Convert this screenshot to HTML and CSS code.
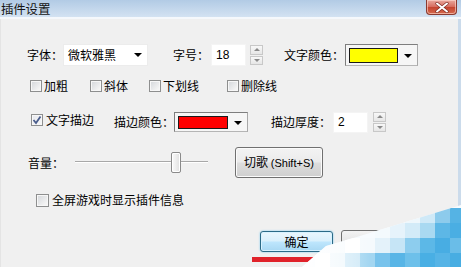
FILE: index.html
```html
<!DOCTYPE html>
<html lang="zh-CN">
<head>
<meta charset="utf-8">
<title>插件设置</title>
<link rel="stylesheet" href="styles.css">
</head>
<body>
<div class="win">
  <div class="titlebar">
    <span class="title">插件设置</span>
    <span class="close">
      <svg width="14" height="11" viewBox="0 0 14 11"><path d="M2 1.5 L12 9.5 M12 1.5 L2 9.5" stroke="#7a2a22" stroke-width="3.2" stroke-linecap="round"/><path d="M2 1.5 L12 9.5 M12 1.5 L2 9.5" stroke="#ffffff" stroke-width="2" stroke-linecap="round"/></svg>
    </span>
  </div>
  <div class="body">
    <div class="content">
      <div class="row r1">
        <span class="lbl w36">字体：</span>
        <div class="combo">
          <span class="combo-text">微软雅黑</span>
          <i class="arrow"></i>
        </div>
        <span class="lbl w38 ml25">字号：</span>
        <div class="field w35">18</div>
        <div class="spinbtns ml4"><b class="sb up"></b><b class="sb down"></b></div>
        <span class="lbl w61 ml21">文字颜色：</span>
        <div class="colorcombo w73">
          <span class="swatch yellow"></span>
          <span class="dd"><i class="arrow"></i></span>
        </div>
      </div>

      <div class="row r2">
        <label class="chk w60"><span class="cb"></span><span>加粗</span></label>
        <label class="chk w59"><span class="cb"></span><span>斜体</span></label>
        <label class="chk w78"><span class="cb"></span><span>下划线</span></label>
        <label class="chk"><span class="cb"></span><span>删除线</span></label>
      </div>

      <div class="row r3">
        <label class="chk chk-up"><span class="cb checked"><svg width="10" height="10" viewBox="0 0 10 10"><path d="M1.5 5 L4 8 L8.5 1.5" fill="none" stroke="#4a5d8c" stroke-width="1.8"/></svg></span><span>文字描边</span></label>
        <span class="lbl w60 ml20">描边颜色：</span>
        <div class="colorcombo w74 h20">
          <span class="swatch red"></span>
          <span class="dd"><i class="arrow"></i></span>
        </div>
        <span class="lbl w62 ml23">描边厚度：</span>
        <div class="field w35 h21">2</div>
        <div class="spinbtns ml5"><b class="sb up"></b><b class="sb down"></b></div>
      </div>

      <div class="row r4">
        <span class="lbl w47">音量：</span>
        <div class="slider">
          <span class="track"></span>
          <span class="thumb"></span>
        </div>
        <button class="btn cut">切歌 <span class="latin">(Shift+S)</span></button>
      </div>

      <div class="row r5">
        <label class="chk"><span class="cb"></span><span>全屏游戏时显示插件信息</span></label>
      </div>

      <div class="row r6">
        <button class="btn ok">确定</button>
        <button class="btn cancel"></button>
      </div>
    </div>
    <div class="edge"></div>
  </div>

  <span class="underline"></span>

  <svg class="mosaic" width="171" height="67" viewBox="290 200 171 67">
    <defs>
      <clipPath id="cp"><polygon points="302,267 326,246 360,236 461,205 461,267"/></clipPath>
      <linearGradient id="wh" x1="0" y1="0" x2="1" y2="0">
        <stop offset="0" stop-color="#ffffff" stop-opacity="1"/>
        <stop offset="1" stop-color="#ffffff" stop-opacity="0"/>
      </linearGradient>
    </defs>
    <g clip-path="url(#cp)">
      <rect x="290" y="200" width="171" height="67" fill="#f7fbfe"/>
      <rect x="405" y="208" width="15" height="15" fill="#eef7fc"/>
      <rect x="420" y="208" width="15" height="15" fill="#cfe9f7"/>
      <rect x="435" y="208" width="15" height="15" fill="#8dcbec"/>
      <rect x="450" y="208" width="11" height="15" fill="#55b3e4"/>
      <rect x="375" y="223" width="15" height="15" fill="#f4fafd"/>
      <rect x="390" y="223" width="15" height="15" fill="#e6f3fb"/>
      <rect x="405" y="223" width="15" height="15" fill="#d3ebf8"/>
      <rect x="420" y="223" width="15" height="15" fill="#a9d9f1"/>
      <rect x="435" y="223" width="15" height="15" fill="#5db7e6"/>
      <rect x="450" y="223" width="11" height="15" fill="#4aaee3"/>
      <rect x="345" y="238" width="15" height="15" fill="#ffffff"/>
      <rect x="360" y="238" width="15" height="15" fill="#f5fafd"/>
      <rect x="375" y="238" width="15" height="15" fill="#e4f2fa"/>
      <rect x="390" y="238" width="15" height="15" fill="#c6e5f6"/>
      <rect x="405" y="238" width="15" height="15" fill="#8dcdee"/>
      <rect x="420" y="238" width="15" height="15" fill="#5cb8e7"/>
      <rect x="435" y="238" width="15" height="15" fill="#48ade3"/>
      <rect x="450" y="238" width="11" height="15" fill="#6abde8"/>
      <rect x="315" y="253" width="15" height="14" fill="#ffffff"/>
      <rect x="330" y="253" width="15" height="14" fill="#eef7fc"/>
      <rect x="345" y="253" width="15" height="14" fill="#cfe9f7"/>
      <rect x="360" y="253" width="15" height="14" fill="#a3d6f1"/>
      <rect x="375" y="253" width="15" height="14" fill="#78c3ec"/>
      <rect x="390" y="253" width="15" height="14" fill="#58b5e6"/>
      <rect x="405" y="253" width="15" height="14" fill="#6dc0ea"/>
      <rect x="420" y="253" width="15" height="14" fill="#49afe4"/>
      <rect x="435" y="253" width="15" height="14" fill="#56b4e6"/>
      <rect x="450" y="253" width="11" height="14" fill="#48ade2"/>
      <rect x="300" y="238" width="70" height="29" fill="url(#wh)"/>
    </g>
  </svg>
</div>
</body>
</html>
```

FILE: styles.css
```css
* { box-sizing: border-box; margin: 0; padding: 0; }
html, body { width: 461px; height: 267px; overflow: hidden; }
body {
  font-family: "Noto Sans CJK SC", "Noto Sans", sans-serif;
  font-size: 12px;
  line-height: 16px;
  color: #000;
  background: #f0f0f0;
}
.win {
  position: relative;
  width: 461px;
  height: 267px;
  display: flex;
  flex-direction: column;
  background: #f0f0f0;
  overflow: hidden;
}
.titlebar {
  height: 19px;
  flex: none;
  display: flex;
  justify-content: space-between;
  align-items: flex-start;
  background: linear-gradient(#b2cbe5, #d3e2f2);
  border-bottom: 2px solid #f5f8fc;
}
.title { font-size: 12.5px; line-height: 17px; color: #151515; letter-spacing: -0.2px; padding-left: 1px; }
.close {
  width: 31px;
  height: 15px;
  margin-right: 4px;
  display: flex;
  align-items: center;
  justify-content: center;
  border: 1px solid #8a3a30;
  border-top: none;
  border-radius: 0 0 4px 4px;
  background: linear-gradient(#e9a99e, #d66a5c 50%, #c4442f 52%, #d56a4f);
  box-shadow: inset 0 0 0 1px rgba(255, 220, 210, 0.6);
}
.body { flex: 1; display: flex; }
.content {
  flex: 1;
  padding-left: 27px;
  display: flex;
  flex-direction: column;
  border-left: 1px solid #e4e4e4;
}
.edge { width: 3px; background: #cbdbeb; }

.row { display: flex; align-items: center; flex: none; }
.r1 { margin-top: 25px; height: 22px; margin-left: -1px; }
.r2 { margin-top: 13px; height: 14px; padding-left: 2px; }
.r3 { margin-top: 18px; height: 22px; }
.r4 { margin-top: 14px; height: 31px; }
.r5 { margin-top: 14px; height: 16px; padding-left: 8px; }
.r6 { margin-top: 23px; height: 21px; padding-left: 232px; align-items: flex-start; }

.lbl { white-space: nowrap; flex: none; }
.w35 { width: 35px; } .w36 { width: 36px; } .w38 { width: 38px; }
.w47 { width: 47px; } .w59 { width: 59px; } .w60 { width: 60px; }
.w61 { width: 61px; } .w62 { width: 62px; } .w73 { width: 73px; }
.w74 { width: 74px; } .w78 { width: 78px; }
.ml4 { margin-left: 4px; } .ml5 { margin-left: 5px; } .ml20 { margin-left: 20px; }
.ml21 { margin-left: 21px; } .ml23 { margin-left: 23px; } .ml25 { margin-left: 25px; }
.h20 { height: 20px !important; } .h21 { height: 21px !important; }

.combo {
  width: 85px;
  height: 22px;
  background: #fff;
  border: 1px solid #ececec;
  display: flex;
  align-items: center;
  padding-left: 4px;
  flex: none;
}
.combo-text { flex: 1; }
.combo .arrow { margin-right: 5px; }
.arrow {
  display: block;
  width: 0; height: 0;
  border-left: 4px solid transparent;
  border-right: 4px solid transparent;
  border-top: 4px solid #000;
}
.field {
  height: 22px;
  background: #fff;
  border: 1px solid #f4f4f4;
  padding-left: 4px;
  display: flex;
  align-items: center;
  font-family: "Liberation Sans", sans-serif;
  font-size: 12px;
  flex: none;
}
.spinbtns { width: 13px; height: 20px; display: flex; flex-direction: column; gap: 1px; flex: none; }
.sb {
  flex: 1;
  border: 1px solid #c8c8c8;
  background: linear-gradient(#f8f8f8, #e6e6e6);
  display: flex;
  align-items: center;
  justify-content: center;
}
.sb::after {
  content: "";
  width: 0; height: 0;
  border-left: 3px solid transparent;
  border-right: 3px solid transparent;
}
.sb.up::after { border-bottom: 3px solid #8a8a8a; }
.sb.down::after { border-top: 3px solid #8a8a8a; }

.colorcombo {
  height: 22px;
  display: flex;
  align-items: stretch;
  padding: 3px 1px 2px 3px;
  border: 1px solid #7e7e7e;
  border-right-color: #a8a8a8;
  border-bottom-color: #b5b5b5;
  background: #f6f6f6;
  flex: none;
}
.swatch { flex: 1; border: 1px solid #1a1a1a; }
.yellow { background: #ffff00; }
.red { background: #ff0000; }
.dd {
  width: 17px;
  margin-left: 1px;
  display: flex;
  align-items: center;
  justify-content: center;
}

.chk { display: flex; align-items: center; gap: 2px; white-space: nowrap; flex: none; }
.r3 .chk { padding-left: 3px; gap: 3px; }
.r5 .chk { gap: 3px; }
.chk-up { align-self: flex-start; margin-top: 0; height: 17px; }
.cb {
  width: 12px;
  height: 12px;
  border: 1px solid #8e8f8f;
  background: linear-gradient(135deg, #d3d6da, #f4f4f4 80%);
  box-shadow: inset 0 0 0 1px #f7f7f7;
  display: flex;
  align-items: center;
  justify-content: center;
  flex: none;
}
.r5 .cb { width: 13px; height: 13px; }
.cb.checked { background: linear-gradient(135deg, #e6e8ee, #f7f7f7); }

.slider { width: 133px; height: 21px; position: relative; flex: none; }
.track {
  position: absolute;
  left: 0; right: 0; top: 9px;
  height: 2px;
  border-top: 1px solid #a8a8a8;
  border-bottom: 1px solid #ffffff;
}
.thumb {
  position: absolute;
  left: 96px; top: 0;
  width: 10px; height: 21px;
  border: 1px solid #8a8a8a;
  border-radius: 2px;
  background: linear-gradient(90deg, #fbfbfb, #e0e0e0);
  box-shadow: inset 0 0 0 1px #ffffff;
}

.btn {
  font-family: "Noto Sans CJK SC", sans-serif;
  font-size: 12px;
  line-height: 16px;
  color: #000;
  border-radius: 3px;
  flex: none;
}
.cut {
  margin-left: 27px;
  width: 88px;
  height: 31px;
  border: 1px solid #707070;
  background: linear-gradient(#f3f3f3, #ebebeb 48%, #dddddd 52%, #cfcfcf);
  box-shadow: inset 0 0 0 1px #fbfbfb;
}
.latin { font-family: "Liberation Sans", sans-serif; font-size: 11px; }
.ok {
  width: 73px;
  height: 21px;
  border: 1px solid #2b6a87;
  background: linear-gradient(#eaf6fd, #d9f0fc 48%, #bee6fd 52%, #a8d8f3);
  box-shadow: inset 0 0 0 1px #d8f2ff, 0 0 2px #6fc6ee;
  line-height: 17px;
}
.cancel {
  margin-left: 8px;
  margin-top: -1px;
  width: 73px;
  height: 21px;
  border: 1px solid #707070;
  background: linear-gradient(#f3f3f3, #dcdcdc);
}

.underline {
  position: absolute;
  left: 252px; top: 257px;
  width: 74px; height: 5px;
  background: #e0222a;
}
.mosaic { position: absolute; left: 290px; top: 200px; }
```
